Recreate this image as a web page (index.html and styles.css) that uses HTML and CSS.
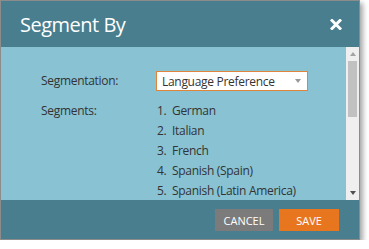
FILE: index.html
```html
<!DOCTYPE html>
<html lang="en">
<head>
  <meta charset="UTF-8" />
  <title>Segment By</title>
  <link rel="stylesheet" href="styles.css">
</head>
<body>
  <div class="dialog">
    <div class="dialog-header">
      <h1>Segment By</h1>
      <button class="close" title="Close">
        <svg width="12" height="11" viewBox="0 0 12 11">
          <path d="M2 1.5 L10 9.5 M10 1.5 L2 9.5" stroke="#fff" stroke-width="3" stroke-linecap="square" />
        </svg>
      </button>
    </div>

    <div class="dialog-body">
      <div class="content">
        <div class="row">
          <label class="field-label">Segmentation:</label>
          <div class="select">
            <span>Language Preference</span>
            <span class="caret"></span>
          </div>
        </div>
        <div class="row">
          <label class="field-label">Segments:</label>
          <ol class="segments">
            <li><span class="num">1.</span>German</li>
            <li><span class="num">2.</span>Italian</li>
            <li><span class="num">3.</span>French</li>
            <li><span class="num">4.</span>Spanish (Spain)</li>
            <li><span class="num">5.</span>Spanish (Latin America)</li>
          </ol>
        </div>
      </div>
      <div class="scrollbar">
        <span class="arrow up"></span>
        <div class="track"><div class="thumb"></div></div>
        <span class="arrow down"></span>
      </div>
    </div>

    <div class="dialog-footer">
      <button class="btn cancel">Cancel</button>
      <button class="btn save">Save</button>
    </div>
  </div>
</body>
</html>
```

FILE: styles.css
```css
body { margin: 0; background: #fff; font-family: "Open Sans", Arial, sans-serif; color: #333; }

.dialog {
  width: 358px; border: 1px solid #8c8c8c;
  box-shadow: 3px 3px 5px rgba(0, 0, 0, 0.35);
}

.dialog-header {
  height: 46px; background: #487e8e;
  display: flex; align-items: center; justify-content: space-between;
  padding: 0 17px 0 19px;
}
.dialog-header h1 { margin: 0; font-size: 20px; font-weight: normal; color: #fff; letter-spacing: -0.5px; }
.close { background: none; border: none; padding: 0; display: flex; cursor: pointer; }

.dialog-body { height: 153px; background: #88c2d3; display: flex; }
.content { flex: 1; overflow: hidden; padding: 24px 0 0 40px; font-size: 12px; letter-spacing: -0.3px; }
.row { display: flex; margin-bottom: 10px; }
.field-label { width: 115px; line-height: 20px; }

.select {
  height: 18px; width: 139px; background: #fff; border: 1px solid #e0843a;
  display: flex; align-items: center; justify-content: space-between;
  padding: 0 6px 0 5px;
}
.caret {
  width: 0; height: 0;
  border-left: 3.5px solid transparent; border-right: 3.5px solid transparent;
  border-top: 4px solid #999;
}

.segments { list-style: none; margin: 0; padding: 0 0 0 1px; }
.segments li { line-height: 20px; white-space: nowrap; }
.num { display: inline-block; width: 15px; }

.scrollbar { width: 13px; background: #efefef; display: flex; flex-direction: column; align-items: center; }
.arrow { width: 0; height: 0; border-left: 3.5px solid transparent; border-right: 3.5px solid transparent; margin: 5px 0; }
.arrow.up { border-bottom: 4px solid #a3a3a3; }
.arrow.down { border-top: 4px solid #505050; }
.track { flex: 1; width: 9px; }
.thumb { height: 56px; background: #c1c1c1; }

.dialog-footer {
  height: 39px; background: #487e8e;
  display: flex; justify-content: flex-end; align-items: flex-start;
  padding: 9px 20px 0 0; box-sizing: border-box; gap: 6px;
}
.btn {
  height: 22px; border: none; color: #fff; text-transform: uppercase;
  font-family: "Open Sans", Arial, sans-serif; font-size: 11px; padding: 0;
  cursor: pointer;
}
.cancel { width: 58px; background: #7b7b7b; }
.save { width: 60px; background: #e8761f; }
```
